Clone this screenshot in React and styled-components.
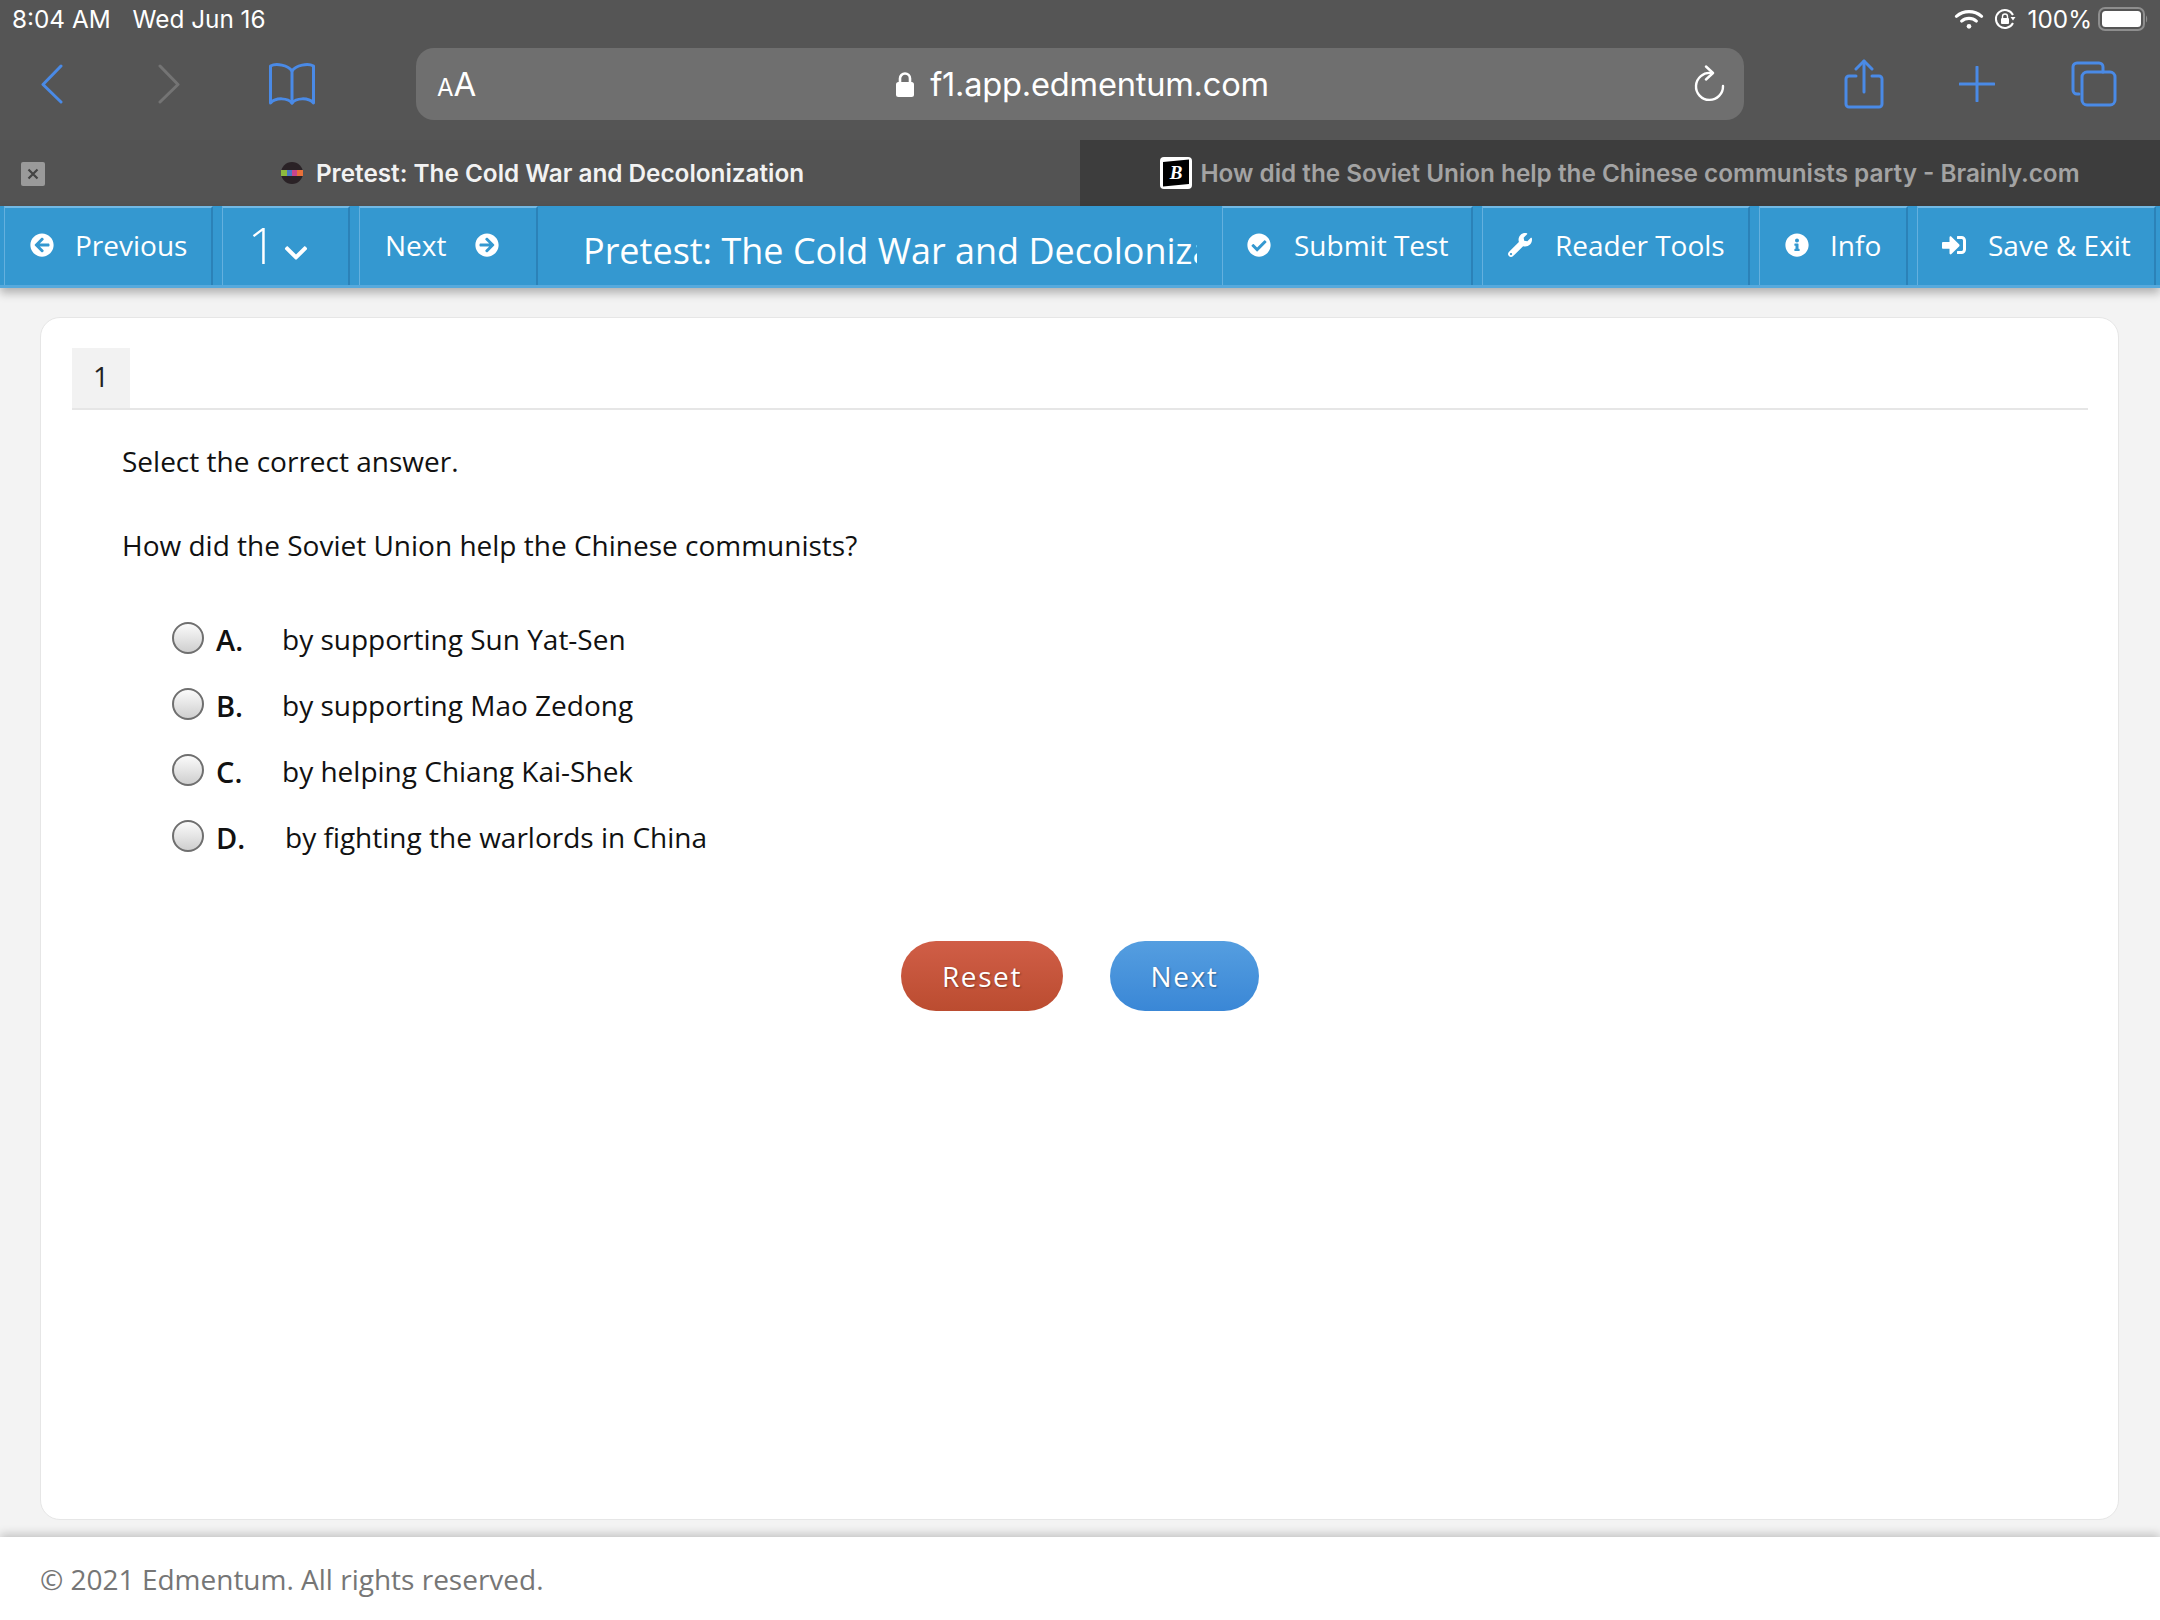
import React from 'react'
import styled, { createGlobalStyle } from 'styled-components'
import {
  FaArrowCircleLeft,
  FaArrowCircleRight,
  FaCheckCircle,
  FaChevronDown,
  FaInfoCircle,
  FaSignInAlt,
  FaWrench,
} from 'react-icons/fa'

const GlobalStyle = createGlobalStyle`
  html, body {
    margin: 0;
    padding: 0;
    width: 2160px;
    height: 1620px;
    overflow: hidden;
    background: #f3f3f3;
  }
  * { box-sizing: border-box; }
`

const Page = styled.div`
  display: flex;
  flex-direction: column;
  width: 2160px;
  height: 1620px;
  font-family: "Open Sans", "Liberation Sans", sans-serif;
`

const BrowserChrome = styled.div`
  display: flex;
  flex-direction: column;
  background: #555555;
  font-family: Inter, "Liberation Sans", sans-serif;
`

const StatusBar = styled.div`
  display: flex;
  justify-content: space-between;
  align-items: center;
  height: 38px;
  padding: 0 12px 0 12px;
  color: #fff;
  font-size: 24.3px;
`

const StatusGroup = styled.div`
  display: flex;
  align-items: center;
  gap: ${p => p.$gap}px;
`

const BatteryPercent = styled.span`
  margin: 0 -4px 0 2px;
`

const Toolbar = styled.div`
  display: flex;
  align-items: center;
  height: 102px;
  padding: 10px 44px 20px 41px;
`

const ToolIcon = styled.svg`
  display: block;
  flex: none;
  margin-right: ${p => p.$mr || 0}px;
  fill: none;
  stroke: ${p => p.$color || '#4a8ae6'};
  stroke-width: 3;
  stroke-linecap: round;
  stroke-linejoin: round;
`

const AddressBar = styled.div`
  position: relative;
  display: flex;
  align-items: center;
  justify-content: center;
  flex: none;
  width: 1328px;
  height: 72px;
  margin-right: 100px;
  padding: 0 19px 0 21px;
  background: #6f6f6f;
  border-radius: 18px;
  color: #fff;
`

const ReaderLabel = styled.div`
  position: absolute;
  left: 21px;
  top: 18px;
  font-size: 33px;
  line-height: 36px;
  small { font-size: 24px; }
`

const UrlText = styled.div`
  display: flex;
  align-items: center;
  gap: 16px;
  margin-left: 3px;
  font-size: 32.6px;
  letter-spacing: -0.2px;
`

const ReloadSlot = styled.div`
  position: absolute;
  right: 18px;
  top: 17px;
`

const TabStrip = styled.div`
  display: flex;
  height: 66px;
`

const Tab = styled.div`
  position: relative;
  display: flex;
  align-items: center;
  justify-content: center;
  gap: ${p => p.$gap}px;
  flex: none;
  width: 1080px;
  padding: ${p => p.$pad};
  background: ${p => (p.$active ? '#535353' : '#3d3d3d')};
  color: ${p => (p.$active ? '#f2f2f2' : '#a3a3a3')};
  font-size: 24.3px;
  font-weight: 600;
  white-space: nowrap;
`

const TabClose = styled.div`
  position: absolute;
  left: 21px;
  top: 22px;
  display: flex;
  align-items: center;
  justify-content: center;
  width: 24px;
  height: 24px;
  background: #9a9a9a;
  border-radius: 2px;
  color: #444;
`

const NavBar = styled.div`
  position: relative;
  z-index: 2;
  display: flex;
  height: 82px;
  padding-left: 4px;
  background: #3498d0;
  border-bottom: 3px solid #56a9dc;
  box-shadow: 0 5px 9px rgba(0, 0, 0, 0.28);
  color: #fff;
`

const NavItem = styled.div`
  display: flex;
  align-items: center;
  gap: ${p => p.$gap || 24}px;
  flex: none;
  width: ${p => p.$w}px;
  margin-right: ${p => p.$mr ?? 9}px;
  padding-left: ${p => p.$pl}px;
  padding-bottom: 4px;
  border-top: 2px solid #72b9e4;
  border-left: 1px solid #64b0de;
  border-right: 2px solid #2b82b8;
  font-size: 28px;
  white-space: nowrap;
  svg { flex: none; font-size: 24px; }
`

const PageNumber = styled.span`
  font-size: 50px;
  font-weight: 300;
  line-height: 50px;
`

const ChevronSlot = styled.span`
  display: flex;
  margin: 16px 0 0 -8px;
  svg { font-size: 26px; }
`

const TitleSlot = styled.div`
  flex: none;
  width: 684px;
  padding: 1px 25px 0 45px;
  overflow: hidden;
  font-size: 36px;
  line-height: 88px;
  white-space: nowrap;
  span {
    display: block;
    overflow: hidden;
  }
`

const Main = styled.main`
  display: flex;
  flex: 1;
  min-height: 0;
  padding: 29px 41px 17px 40px;
  background: #f3f3f3;
`

const Card = styled.section`
  flex: 1;
  padding: 30px 30px 0 31px;
  background: #fff;
  border: 1px solid #e6e6e6;
  border-radius: 20px;
`

const TabRow = styled.div`
  display: flex;
  border-bottom: 2px solid #e6e6e6;
`

const NumberTab = styled.div`
  width: 58px;
  height: 60px;
  background: #f2f2f2;
  color: #222;
  font-size: 28px;
  font-weight: 500;
  line-height: 56px;
  text-align: center;
`

const Question = styled.div`
  padding: 32px 0 0 50px;
  color: #111;
  font-size: 28px;
`

const QuestionLine = styled.p`
  margin: 0 0 46px;
  line-height: 38px;
`

const Options = styled.div`
  display: flex;
  flex-direction: column;
  margin-top: -4px;
  padding: 0 0 0 100px;
  color: #111;
  font-size: 28px;
`

const Option = styled.label`
  display: flex;
  align-items: center;
  height: 66px;
`

const Radio = styled.span`
  flex: none;
  width: 32px;
  height: 32px;
  margin-right: 12px;
  margin-top: -2px;
  background: linear-gradient(#fbfbfb, #cfcfcf);
  border: 2px solid #6f6f6f;
  border-radius: 50%;
`

const OptionLetter = styled.span`
  flex: none;
  width: ${p => p.$w}px;
  font-size: 29px;
  font-weight: 600;
`

const Actions = styled.div`
  display: flex;
  justify-content: center;
  gap: 47px;
  padding: 71px 0 0 0;
`

const ActionButton = styled.button`
  width: ${p => p.$w}px;
  height: 70px;
  padding: 0;
  border: 0;
  border-radius: 35px;
  background: ${p => (p.$danger
    ? 'linear-gradient(#d05e47, #bb4c30)'
    : 'linear-gradient(#559ee0, #3a87d6)')};
  color: #fff;
  font-family: inherit;
  font-size: 28px;
  font-weight: 500;
  letter-spacing: 1.6px;
  text-shadow: 1px 1px 2px rgba(0, 0, 0, 0.35);
`

const Footer = styled.footer`
  position: relative;
  z-index: 2;
  height: 83px;
  padding: 23px 0 0 40px;
  background: #fff;
  box-shadow: 0 -3px 9px rgba(0, 0, 0, 0.2);
  color: #767676;
  font-size: 28px;
  line-height: 38px;
`

const options = [
  { letter: 'A.', width: 66, text: 'by supporting Sun Yat-Sen' },
  { letter: 'B.', width: 66, text: 'by supporting Mao Zedong' },
  { letter: 'C.', width: 66, text: 'by helping Chiang Kai-Shek' },
  { letter: 'D.', width: 69, text: 'by fighting the warlords in China' },
]

function StatusIcons() {
  return (
    <StatusGroup $gap={10}>
      <svg width="30" height="21" viewBox="0 0 28 20" fill="none" stroke="#fff" strokeWidth="3" strokeLinecap="round">
        <path d="M2 7 C9 1 19 1 26 7" />
        <path d="M7 11.5 C11 8 17 8 21 11.5" />
        <circle cx="14" cy="16.5" r="2.2" fill="#fff" stroke="none" />
      </svg>
      <svg width="22" height="22" viewBox="0 0 22 22" fill="none" stroke="#fff" strokeWidth="2">
        <path d="M19 7 A9 9 0 1 0 19 15" />
        <path d="M21.5 9 L19 12.5 L16.5 9 Z" fill="#fff" stroke="none" />
        <rect x="7" y="10" width="8" height="6" rx="1" fill="#fff" stroke="none" />
        <path d="M8.5 10 V8.5 A2.5 2.5 0 0 1 13.5 8.5 V10" strokeWidth="1.4" />
      </svg>
      <BatteryPercent>100%</BatteryPercent>
      <svg width="50" height="24" viewBox="0 0 50 24">
        <rect x="1" y="1" width="45" height="22" rx="6" fill="none" stroke="#8e8e8e" strokeWidth="2" />
        <rect x="4" y="4" width="39" height="16" rx="3.5" fill="#fff" />
        <path d="M48 8.5 C49.6 9.5 49.6 14.5 48 15.5 Z" fill="#8e8e8e" />
      </svg>
    </StatusGroup>
  )
}

export default function App() {
  return (
    <Page>
      <GlobalStyle />
      <BrowserChrome>
        <StatusBar>
          <StatusGroup $gap={22}>
            <span>8:04 AM</span>
            <span>Wed Jun 16</span>
          </StatusGroup>
          <StatusIcons />
        </StatusBar>
        <Toolbar>
          <ToolIcon width="38" height="48" viewBox="0 0 38 48" $mr={63}>
            <path d="M20 6 L2 24.500 L20 42" />
          </ToolIcon>
          <ToolIcon width="38" height="48" viewBox="0 0 38 48" $mr={88} $color="#747474">
            <path d="M18 6 L36 24.500 L18 42" />
          </ToolIcon>
          <ToolIcon width="48" height="44" viewBox="0 0 48 44" $mr={100}>
            <path d="M24 9 C20 3 8 1 2.500 4 V41 C8 35 20 36 24 41 C28 36 40 35 45.500 41 V4 C40 1 28 3 24 9 Z" />
            <path d="M24 9 V41" />
          </ToolIcon>
          <AddressBar>
            <ReaderLabel><small>A</small>A</ReaderLabel>
            <UrlText>
              <svg width="18" height="26" viewBox="0 0 18 26">
                <path d="M4 12 V7.500 A5 5 0 0 1 14 7.500 V12" fill="none" stroke="#fff" strokeWidth="2.600" />
                <rect x="0" y="11" width="18" height="15" rx="2.500" fill="#fff" />
              </svg>
              <span>f1.app.edmentum.com</span>
            </UrlText>
            <ReloadSlot>
              <ToolIcon width="32" height="38" viewBox="0 0 32 38" $color="#fff">
                <path d="M17 8 A13.500 13.500 0 1 0 29 21" strokeWidth="2.400" />
                <path d="M12 1.500 L19 8 L12 14.500" strokeWidth="2.400" />
              </ToolIcon>
            </ReloadSlot>
          </AddressBar>
          <ToolIcon width="40" height="50" viewBox="0 0 40 50" $mr={75}>
            <path d="M12 17 H5 A3 3 0 0 0 2 20 V45 A3 3 0 0 0 5 48 H35 A3 3 0 0 0 38 45 V20 A3 3 0 0 0 35 17 H28" />
            <path d="M20 2 V33" />
            <path d="M12 10 L20 2 L28 10" />
          </ToolIcon>
          <ToolIcon width="36" height="36" viewBox="0 0 36 36" $mr={76}>
            <path d="M18 1 V35 M1 18 H35" />
          </ToolIcon>
          <ToolIcon width="46" height="46" viewBox="0 0 46 46">
            <path d="M8 33 H6 A4 4 0 0 1 2 29 V6 A4 4 0 0 1 6 2 H28 A4 4 0 0 1 32 6 V11" />
            <rect x="11" y="11" width="33" height="33" rx="5" />
          </ToolIcon>
        </Toolbar>
        <TabStrip>
          <Tab $active $gap={13} $pad="0 0 0 5px">
            <TabClose>
              <svg width="12" height="12" viewBox="0 0 12 12" stroke="#444" strokeWidth="2.200">
                <path d="M1.500 1.500 L10.500 10.500 M10.500 1.500 L1.500 10.500" />
              </svg>
            </TabClose>
            <svg width="22" height="22" viewBox="0 0 22 22">
              <circle cx="11" cy="11" r="11" fill="#2a2226" />
              <rect x="0" y="8" width="6" height="6" fill="#8dbb3f" />
              <rect x="6" y="8" width="5" height="6" fill="#4a78c2" />
              <rect x="11" y="8" width="5" height="6" fill="#c9458c" />
              <rect x="16" y="8" width="6" height="6" fill="#e8703a" />
            </svg>
            <span>Pretest: The Cold War and Decolonization</span>
          </Tab>
          <Tab $gap={8} $pad="0">
            <svg width="32" height="32" viewBox="0 0 32 32">
              <rect x="0" y="0" width="32" height="32" rx="4" fill="#fff" />
              <path d="M3 5 L29 2.500 V27 L3 29.500 Z" fill="#000" />
              <text x="16" y="22" textAnchor="middle" fontFamily="Liberation Serif" fontStyle="italic" fontWeight="700" fontSize="19" fill="#fff">B</text>
            </svg>
            <span>How did the Soviet Union help the Chinese communists party - Brainly.com</span>
          </Tab>
        </TabStrip>
      </BrowserChrome>

      <NavBar>
        <NavItem $w={209} $pl={25} $gap={21}>
          <FaArrowCircleLeft />
          <span>Previous</span>
        </NavItem>
        <NavItem $w={128} $pl={25} $gap={14}>
          <PageNumber>1</PageNumber>
          <ChevronSlot><FaChevronDown /></ChevronSlot>
        </NavItem>
        <NavItem $w={179} $pl={25} $gap={29} $mr={0}>
          <span>Next</span>
          <FaArrowCircleRight />
        </NavItem>
        <TitleSlot>
          <span>Pretest: The Cold War and Decolonization</span>
        </TitleSlot>
        <NavItem $w={251} $pl={24} $gap={23}>
          <FaCheckCircle />
          <span>Submit Test</span>
        </NavItem>
        <NavItem $w={268} $pl={25} $gap={23}>
          <FaWrench />
          <span>Reader Tools</span>
        </NavItem>
        <NavItem $w={149} $pl={25} $gap={21}>
          <FaInfoCircle />
          <span>Info</span>
        </NavItem>
        <NavItem $w={239} $pl={24} $gap={22} $mr={0}>
          <FaSignInAlt />
          <span>Save &amp; Exit</span>
        </NavItem>
      </NavBar>

      <Main>
        <Card>
          <TabRow>
            <NumberTab>1</NumberTab>
          </TabRow>
          <Question>
            <QuestionLine>Select the correct answer.</QuestionLine>
            <QuestionLine>How did the Soviet Union help the Chinese communists?</QuestionLine>
          </Question>
          <Options>
            {options.map(o => (
              <Option key={o.letter}>
                <Radio />
                <OptionLetter $w={o.width}>{o.letter}</OptionLetter>
                <span>{o.text}</span>
              </Option>
            ))}
          </Options>
          <Actions>
            <ActionButton $danger $w={162}>Reset</ActionButton>
            <ActionButton $w={149}>Next</ActionButton>
          </Actions>
        </Card>
      </Main>

      <Footer>© 2021 Edmentum. All rights reserved.</Footer>
    </Page>
  )
}
